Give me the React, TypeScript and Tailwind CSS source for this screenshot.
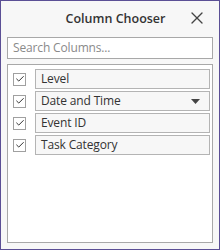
import { Check, X } from "lucide-react";

const columns = [
  { name: "Level", sorted: false },
  { name: "Date and Time", sorted: true },
  { name: "Event ID", sorted: false },
  { name: "Task Category", sorted: false },
];

function ColumnRow({ name, sorted }: { name: string; sorted: boolean }) {
  return (
    <div className="flex h-[20px] items-center">
      <div className="ml-[5px] flex h-[13px] w-[13px] items-center justify-center border border-[#a0a0a0] bg-white">
        <Check className="h-[10px] w-[10px] text-[#333]" strokeWidth={2.4} />
      </div>
      <div className="ml-[9px] flex h-[20px] w-[175px] items-center justify-between border border-[#b4b4b4] bg-[#f7f7f7] pl-[5px] pr-[9px] text-[12px] tracking-[-0.15px] text-[#333]">
        <span>{name}</span>
        {sorted ? (
          <svg width="9" height="5" viewBox="0 0 9 5" className="fill-[#444]">
            <path d="M0 0h9L4.5 5z" />
          </svg>
        ) : null}
      </div>
    </div>
  );
}

export default function App() {
  return (
    <div
      className="flex h-[250px] w-[220px] flex-col border border-[#5b4f95] bg-[#f7f7f7] px-[6px]"
      style={{ fontFamily: '"Open Sans", sans-serif' }}
    >
      <header className="relative flex h-[36px] items-center justify-center">
        <h1 className="pl-[11px] text-[12.5px] font-semibold text-[#333]">Column Chooser</h1>
        <X
          className="absolute right-[6px] top-[7px] h-[20px] w-[20px] text-[#444]"
          strokeWidth={1.6}
        />
      </header>
      <div className="flex h-[22px] items-center border border-[#a8a8a8] bg-white px-[5px] text-[12px] tracking-[-0.15px] text-[#8a8a8a]">
        Search Columns...
      </div>
      <div className="mt-[5px] flex h-[179px] flex-col gap-[2px] border border-[#a8a8a8] bg-white pt-[4px]">
        {columns.map((c) => (
          <ColumnRow key={c.name} name={c.name} sorted={c.sorted} />
        ))}
      </div>
    </div>
  );
}
